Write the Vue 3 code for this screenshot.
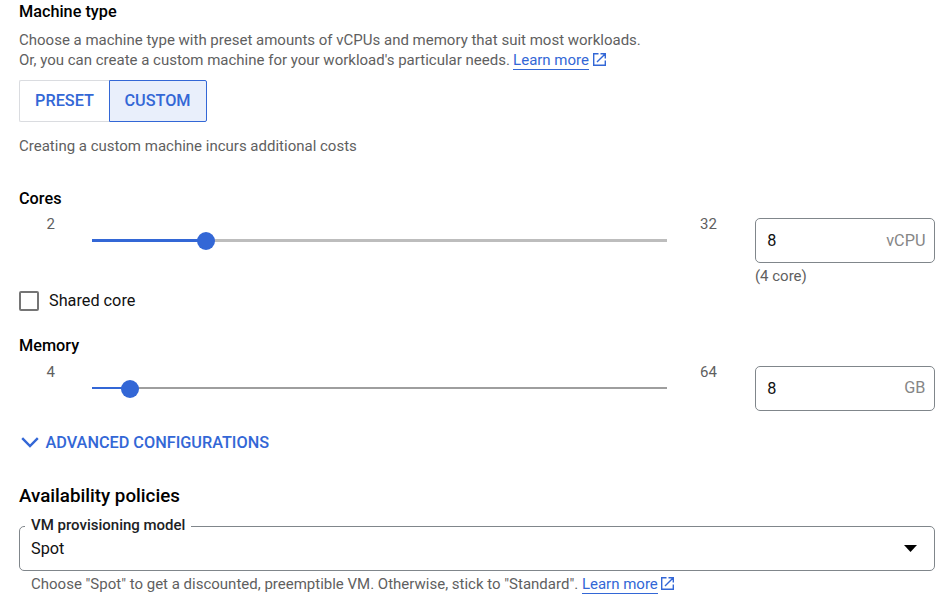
<script setup>
import { ref } from 'vue'

const machineMode = ref('custom')
const sharedCore = ref(false)
const cores = { min: 2, max: 32, value: 8, unit: 'vCPU', percent: 20 }
const memory = { min: 4, max: 64, value: 8, unit: 'GB', percent: 6.6 }
</script>

<template>
  <main class="form">
    <h3 class="heading machine-title">Machine type</h3>
    <p class="description">
      <span class="line">Choose a machine type with preset amounts of vCPUs and memory that suit most workloads.</span>
      <span class="line">Or, you can create a custom machine for your workload's particular needs. <a class="link">Learn more</a><svg class="ext" viewBox="0 0 13 13"><path d="M5.5 .7H.7v11.6h11.6V7.5M7.5 .7h4.8v4.8M12.3 .7L4 9" /></svg></span>
    </p>

    <div class="toggle">
      <button class="option preset" :class="{ active: machineMode === 'preset' }" @click="machineMode = 'preset'">PRESET</button>
      <button class="option custom" :class="{ active: machineMode === 'custom' }" @click="machineMode = 'custom'">CUSTOM</button>
    </div>
    <p class="note">Creating a custom machine incurs additional costs</p>

    <h3 class="heading cores-title">Cores</h3>
    <div class="slider-row cores">
      <span class="min">{{ cores.min }}</span>
      <div class="track">
        <div class="fill" :style="{ width: cores.percent + '%' }"></div>
        <div class="thumb"></div>
      </div>
      <span class="max">{{ cores.max }}</span>
      <div class="field">
        <div class="input"><span>{{ cores.value }}</span><span class="unit">{{ cores.unit }}</span></div>
        <span class="hint">(4 core)</span>
      </div>
    </div>

    <label class="checkbox" @click="sharedCore = !sharedCore">
      <span class="box"></span><span>Shared core</span>
    </label>

    <h3 class="heading memory-title">Memory</h3>
    <div class="slider-row memory">
      <span class="min">{{ memory.min }}</span>
      <div class="track">
        <div class="fill" :style="{ width: memory.percent + '%' }"></div>
        <div class="thumb"></div>
      </div>
      <span class="max">{{ memory.max }}</span>
      <div class="field">
        <div class="input"><span>{{ memory.value }}</span><span class="unit">{{ memory.unit }}</span></div>
      </div>
    </div>

    <div class="advanced">
      <svg class="chevron" viewBox="0 0 18 11"><path d="M1.2 1.2L9 9L16.8 1.2" /></svg>
      <span>ADVANCED CONFIGURATIONS</span>
    </div>

    <h2 class="policies-title">Availability policies</h2>
    <fieldset class="select">
      <legend>VM provisioning model</legend>
      <div class="select-body">
        <span>Spot</span>
        <svg class="caret" viewBox="0 0 13 7"><path d="M0 0h13L6.5 7z" /></svg>
      </div>
    </fieldset>
    <p class="helper">Choose "Spot" to get a discounted, preemptible VM. Otherwise, stick to "Standard". <a class="link">Learn more</a><svg class="ext" viewBox="0 0 13 13"><path d="M5.5 .7H.7v11.6h11.6V7.5M7.5 .7h4.8v4.8M12.3 .7L4 9" /></svg></p>
  </main>
</template>

<style>
body { background: #fff; }
</style>

<style scoped>
.form {
  box-sizing: border-box;
  width: 950px;
  height: 607px;
  padding: 0 15px 0 19px;
  overflow: hidden;
  font: 400 15px/20px Roboto, sans-serif;
  color: #5f5f5f;
}
h2, h3, p { margin: 0; }
.heading {
  height: 20px;
  font-size: 16.25px;
  font-weight: 500;
  line-height: 20px;
  color: #000;
}
.machine-title { margin-top: 2px; }
.description { margin-top: 8px; }
.line { display: block; height: 20px; white-space: nowrap; }
.link {
  display: inline-block;
  height: 19px;
  margin-left: -0.5px;
  line-height: 20px;
  border-bottom: 1px solid #3367d6;
  color: #3367d6;
  cursor: pointer;
}
.ext {
  width: 13px;
  height: 13px;
  margin-left: 4px;
  vertical-align: -1px;
  fill: none;
  stroke: #3367d6;
  stroke-width: 1.4;
}
.toggle { display: flex; height: 42px; margin-top: 10px; }
.option {
  box-sizing: border-box;
  height: 42px;
  padding: 0;
  border: 1px solid #dadce0;
  background: #fff;
  font: 500 16.25px/20px Roboto, sans-serif;
  color: #3367d6;
}
.preset { width: 90px; border-right: 0; border-radius: 2px 0 0 2px; }
.custom { width: 98px; padding-right: 1px; border-radius: 0 2px 2px 0; }
.option.active { border: 1px solid #3367d6; background: #e9effb; }
.note { height: 20px; margin-top: 14px; }
.cores-title { margin-top: 33px; }
.slider-row { display: flex; align-items: flex-start; }
.slider-row.cores { height: 77px; margin-top: 5px; }
.slider-row.memory { height: 49px; margin-top: 6px; }
.min { width: 45.6px; padding-left: 27.4px; }
.track { display: flex; align-items: center; width: 575px; height: 20px; margin-top: 16px; }
.track::after { content: ""; flex: 1; height: 3px; background: #bdbdbd; }
.fill { flex: none; height: 3px; background: #3367d6; }
.thumb { flex: none; width: 18px; height: 18px; margin: 1px -8.5px 0 -9.5px; border-radius: 50%; background: #3367d6; z-index: 1; }
.memory .thumb { margin: 1px -9px 0; }
.memory .fill { height: 2px; }
.memory .track::after { height: 2px; background: #9e9e9e; }
.max { width: 55px; padding-left: 33px; }
.field { width: 180px; margin-top: 4px; }
.input {
  box-sizing: border-box;
  display: flex;
  justify-content: space-between;
  align-items: center;
  height: 45px;
  padding: 0 8.5px 0 11.25px;
  border: 1px solid #80868b;
  border-radius: 5px;
  font-size: 16.25px;
  color: #111;
}
.unit { color: #868686; }
.memory .unit { margin-bottom: 2px; }
.hint { display: block; height: 20px; margin-top: 3px; }
.checkbox { display: flex; align-items: center; gap: 10px; height: 20px; font-size: 16.25px; color: #111; }
.box { box-sizing: border-box; width: 20px; height: 20px; border: 2px solid #757575; border-radius: 2px; }
.memory-title { margin-top: 25px; }
.advanced {
  display: flex;
  align-items: center;
  height: 20px;
  margin-top: 22px;
  padding-left: 2px;
  font-size: 16.25px;
  font-weight: 500;
  color: #3367d6;
}
.chevron { width: 18px; height: 11px; margin: 0 6.5px 1px 0; fill: none; stroke: #3367d6; stroke-width: 2.4; }
.policies-title { height: 24px; margin-top: 31px; font-size: 18.75px; font-weight: 500; line-height: 24px; color: #000; }
.select {
  box-sizing: border-box;
  height: 55px;
  margin: 8px 0 0;
  padding: 0 17px 0 11px;
  border: 1px solid #80868b;
  border-radius: 5px;
}
.select legend {
  height: 20px;
  margin-left: -6px;
  padding: 0 6px;
  font-size: 15px;
  font-weight: 500;
  line-height: 18px;
  color: #202124;
}
.select-body { display: flex; align-items: center; justify-content: space-between; height: 26px; font-size: 16.25px; color: #111; }
.caret { width: 13px; height: 7px; margin-bottom: 2px; fill: #000; }
.helper { height: 20px; margin-top: 3px; padding-left: 12px; white-space: nowrap; }
.helper .link { margin-left: 0; }
.helper .ext { margin-left: 3px; }
</style>
